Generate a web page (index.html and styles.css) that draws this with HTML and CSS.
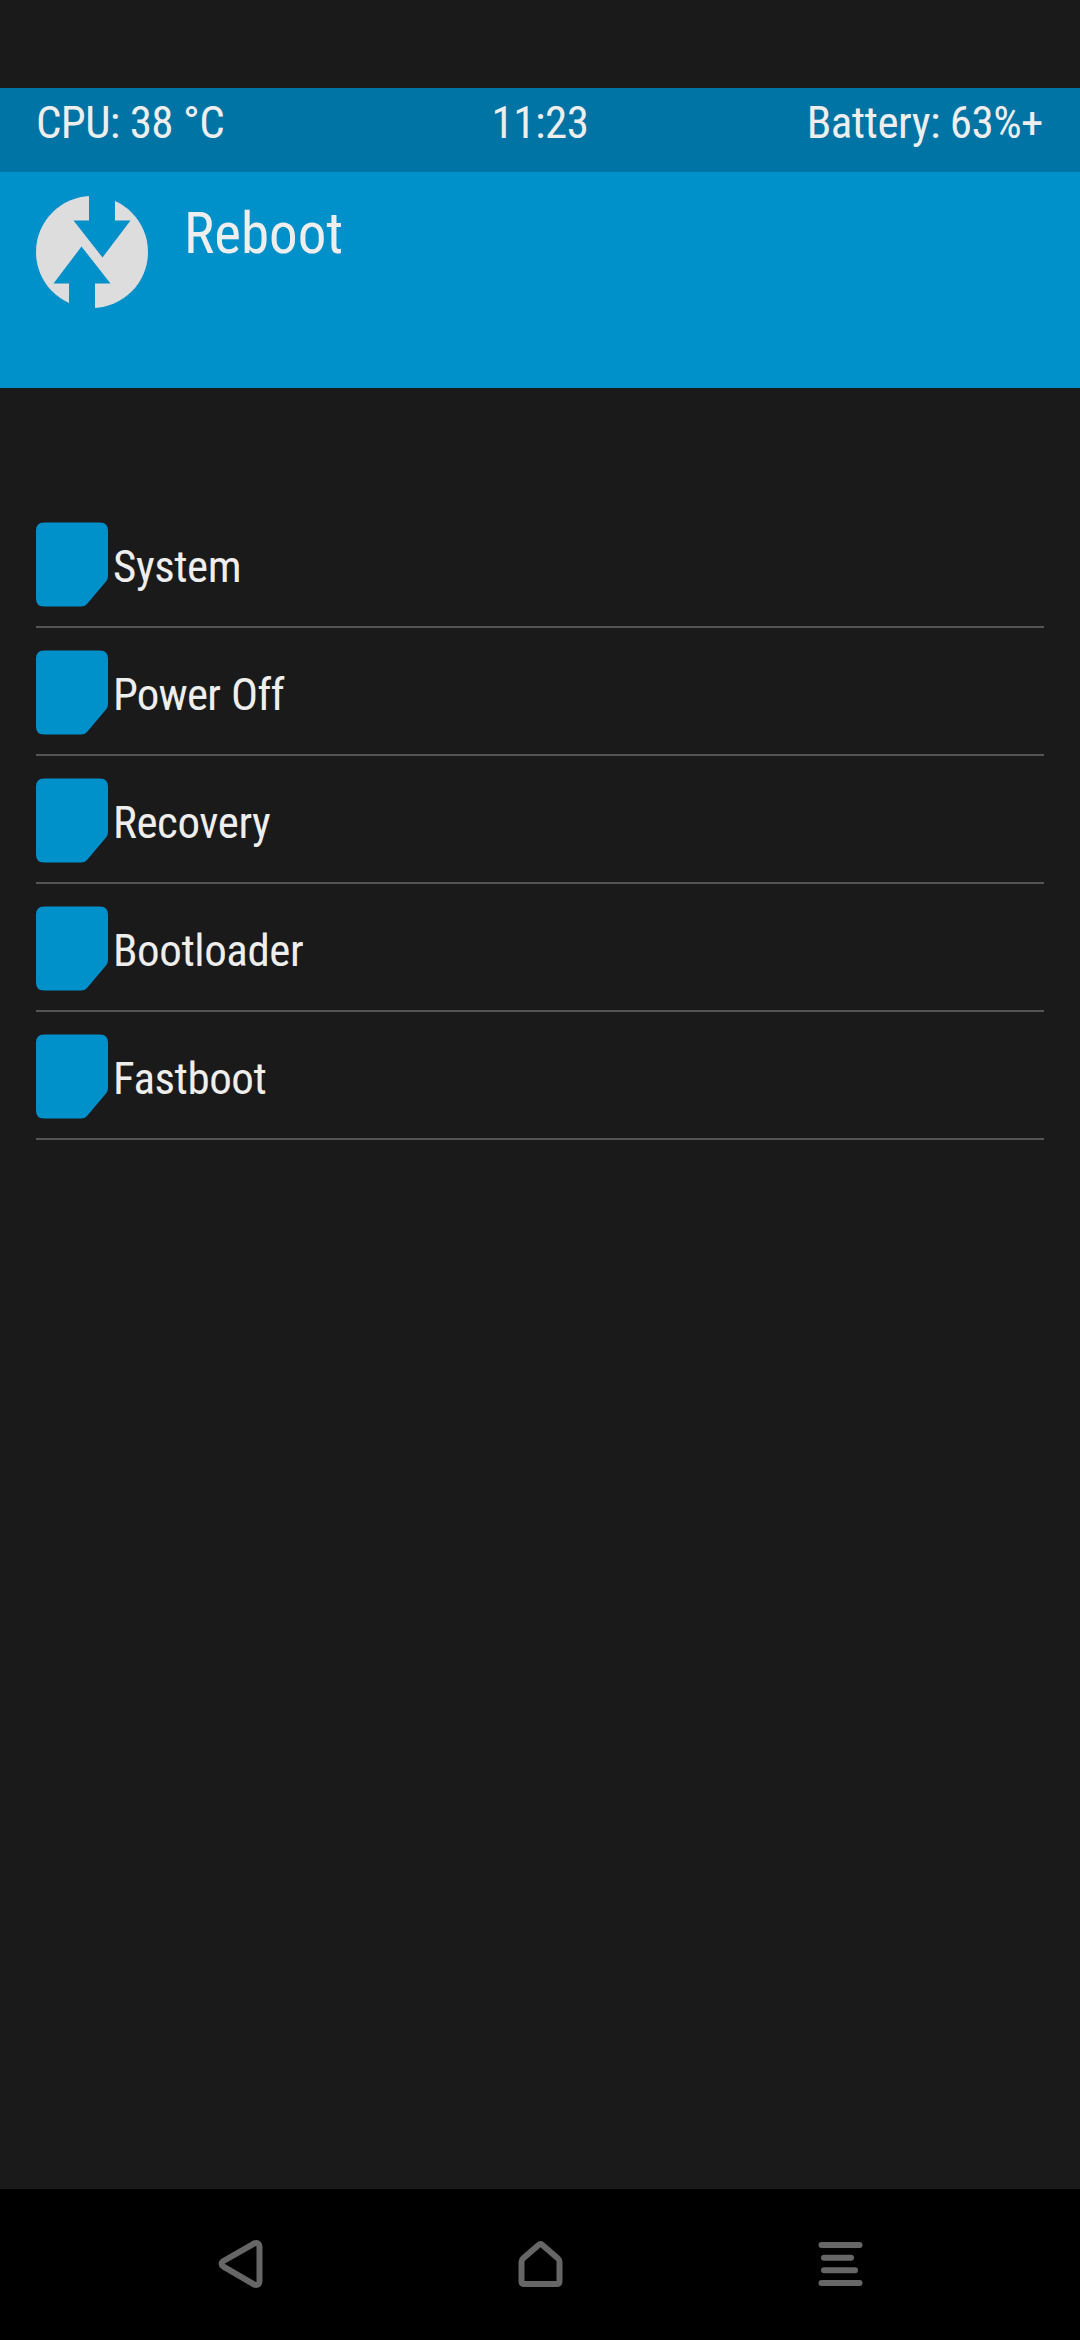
FILE: index.html
```html
<!DOCTYPE html>
<html lang="en">
<head>
<meta charset="utf-8">
<title>Reboot</title>
<link rel="stylesheet" href="styles.css">
</head>
<body>
<div class="screen">
  <div class="status">
    <span class="cpu">CPU: 38 °C</span>
    <span class="clock">11:23</span>
    <span class="battery">Battery: 63%+</span>
  </div>
  <header class="header">
    <svg class="logo" viewBox="0 0 112 112">
      <circle cx="56" cy="56" r="56" fill="#dddddd"/>
      <path class="cut" d="M53 -1H79V24.500H94.500L66.500 61.500L37.500 24.500H53Z"/>
      <path class="cut" d="M59 113H33V87.500H17.500L45.500 50.500L74.500 87.500H59Z"/>
    </svg>
    <h1 class="title">Reboot</h1>
  </header>
  <main class="list">
    <div class="row"><svg class="tile" viewBox="0 0 72 85"><path d="M8 .5H64Q72 .5 72 8.500V54Q72 57 70 59.500L51 82Q49 84.500 45 84.500H8Q0 84.500 0 76.500V8.500Q0 .5 8 .5Z"/></svg><span class="label">System</span></div>
    <div class="row"><svg class="tile" viewBox="0 0 72 85"><path d="M8 .5H64Q72 .5 72 8.500V54Q72 57 70 59.500L51 82Q49 84.500 45 84.500H8Q0 84.500 0 76.500V8.500Q0 .5 8 .5Z"/></svg><span class="label label-tight">Power Off</span></div>
    <div class="row"><svg class="tile" viewBox="0 0 72 85"><path d="M8 .5H64Q72 .5 72 8.500V54Q72 57 70 59.500L51 82Q49 84.500 45 84.500H8Q0 84.500 0 76.500V8.500Q0 .5 8 .5Z"/></svg><span class="label">Recovery</span></div>
    <div class="row"><svg class="tile" viewBox="0 0 72 85"><path d="M8 .5H64Q72 .5 72 8.500V54Q72 57 70 59.500L51 82Q49 84.500 45 84.500H8Q0 84.500 0 76.500V8.500Q0 .5 8 .5Z"/></svg><span class="label">Bootloader</span></div>
    <div class="row"><svg class="tile" viewBox="0 0 72 85"><path d="M8 .5H64Q72 .5 72 8.500V54Q72 57 70 59.500L51 82Q49 84.500 45 84.500H8Q0 84.500 0 76.500V8.500Q0 .5 8 .5Z"/></svg><span class="label">Fastboot</span></div>
  </main>
  <nav class="nav">
    <svg class="key" viewBox="0 0 60 60"><path d="M48.500 9.800Q46.500 8.300 43.500 9.800L13.500 27Q9.500 29.800 13.500 32.600L43.500 50.200Q46.500 51.700 48.500 50.200Q49.500 49.200 49.500 47V13Q49.500 10.800 48.500 9.800Z"/></svg>
    <svg class="key" viewBox="0 0 60 60"><path d="M11.500 28Q11.500 26 13 24.500L28 11.500Q30.500 9 33 11.500L48 24.500Q49.500 26 49.500 28V47Q49.500 50 46.500 50H14.500Q11.500 50 11.500 47Z"/></svg>
    <svg class="key" viewBox="0 0 60 60"><path d="M11.500 11H49.500M14 23.700H41M14 36.300H45M11.500 49H49.500"/></svg>
  </nav>
</div>
</body>
</html>
```
FILE: styles.css
```css
body {
  margin: 0;
  background: #1a1a1a;
  color: #eeeeee;
  font-family: "Roboto Condensed", Roboto, sans-serif;
  font-stretch: 75%;
}
.screen {
  box-sizing: border-box;
  width: 1080px;
  height: 2340px;
  padding-top: 88px;
  display: flex;
  flex-direction: column;
}
.status {
  box-sizing: border-box;
  height: 84px;
  padding: 8px 36px 0;
  display: grid;
  grid-template-columns: 1fr auto 1fr;
  background: #0074a4;
  font-size: 45px;
  line-height: 53px;
  letter-spacing: -0.5px;
}
.cpu { letter-spacing: -0.65px; word-spacing: 0.5px; }
.battery { text-align: right; padding-right: 1px; }
.header {
  box-sizing: border-box;
  height: 216px;
  padding: 24px 36px 0;
  display: flex;
  gap: 36px;
  background: #0090ca;
}
.logo { width: 112px; height: 112px; }
.cut { fill: #0090ca; }
.title {
  margin: 5px 0 0;
  font-size: 57px;
  line-height: 66px;
  font-weight: 400;
}
.list {
  flex: 1;
  padding: 112px 36px 0;
}
.row {
  box-sizing: border-box;
  height: 128px;
  display: flex;
  padding-top: 22px;
  gap: 5px;
  border-bottom: 2px solid #555555;
}
.tile { width: 72px; height: 85px; fill: #0090ca; }
.label {
  margin-top: 18px;
  font-size: 45px;
  line-height: 53px;
  letter-spacing: -0.45px;
}
.label-tight { letter-spacing: -0.85px; word-spacing: 1.5px; }
.nav {
  box-sizing: border-box;
  height: 151px;
  padding: 45px 210px 0;
  display: flex;
  justify-content: space-between;
  background: #000000;
}
.key {
  width: 60px;
  height: 60px;
  fill: none;
  stroke: #666666;
  stroke-width: 6;
  stroke-linecap: round;
  stroke-linejoin: round;
}
```
